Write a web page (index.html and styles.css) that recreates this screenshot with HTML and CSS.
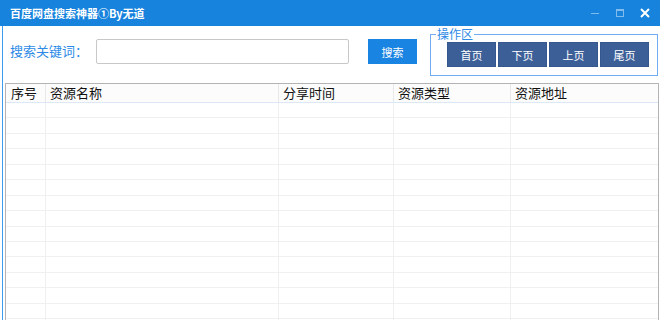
FILE: index.html
```html
<!DOCTYPE html>
<html lang="zh-CN">
<head>
    <meta charset="UTF-8">
    <meta name="viewport" content="width=device-width, initial-scale=1.0">
    <title>百度网盘搜索神器①By无道</title>
    <link rel="stylesheet" href="styles.css">
</head>
<body>
    <div class="titlebar">
        <div class="title">百度网盘搜索神器①By无道</div>
        <div class="controls">
            <svg class="ctl faded" width="14" height="14" viewBox="0 0 14 14"><path d="M3 7.5h8" stroke="#fff" stroke-width="1"/></svg>
            <svg class="ctl faded" width="14" height="14" viewBox="0 0 14 14"><rect x="3.5" y="3.5" width="7" height="7" fill="none" stroke="#fff" stroke-width="1"/><path d="M3.5 4.5h7" stroke="#fff"/></svg>
            <svg class="ctl" width="14" height="14" viewBox="0 0 14 14"><path d="M3 3l8 8M11 3l-8 8" stroke="#fff" stroke-width="2"/></svg>
        </div>
    </div>

    <div class="main">
        <div class="toolbar">
            <label class="kwlabel" for="kw">搜索关键词：</label>
            <input type="text" id="kw" class="kwinput">
            <button class="searchbtn">搜索</button>
            <div class="opbox">
                <span class="oplegend">操作区</span>
                <button class="pagebtn">首页</button>
                <button class="pagebtn">下页</button>
                <button class="pagebtn">上页</button>
                <button class="pagebtn">尾页</button>
            </div>
        </div>

        <div class="grid" id="grid">
            <div class="row head">
                <div class="cell">序号</div>
                <div class="cell">资源名称</div>
                <div class="cell">分享时间</div>
                <div class="cell">资源类型</div>
                <div class="cell">资源地址</div>
            </div>
        </div>
    </div>

    <script>
        const grid = document.getElementById('grid')
        for (let i = 0; i < 15; i++) {
            grid.innerHTML += `
                <div class="row">
                    <div class="cell"></div><div class="cell"></div><div class="cell"></div><div class="cell"></div><div class="cell"></div>
                </div>`
        }
    </script>
</body>
</html>
```

FILE: styles.css
```css
body{
    margin: 0;
    width: 660px;
    height: 320px;
    overflow: hidden;
    background: #fff;
    font-family: "Noto Sans CJK SC", "Noto Sans", sans-serif;
}
.titlebar{
    height: 26px;
    background: #1783dc;
    display: flex;
    align-items: center;
    justify-content: space-between;
}
.title{
    color: #fff;
    font-size: 11px;
    font-weight: bold;
    padding-left: 10px;
}
.controls{
    display: flex;
    align-items: center;
    gap: 11px;
    padding-right: 8px;
}
.ctl.faded{
    opacity: 0.45;
}
.main{
    margin-left: 2px;
    border-left: 1px solid #3d9cf0;
    padding-left: 2px;
    height: 294px;
}
.toolbar{
    height: 57px;
    display: flex;
    align-items: flex-start;
}
.kwlabel{
    color: #2b8ae6;
    font-size: 13px;
    margin: 16px 0 0 5px;
    width: 86px;
    line-height: 18px;
}
.kwinput{
    margin-top: 13px;
    width: 253px;
    height: 25px;
    box-sizing: border-box;
    border: 1px solid #c8c8c8;
    border-radius: 2px;
    outline: none;
}
.searchbtn{
    margin: 13px 0 0 19px;
    width: 49px;
    height: 25px;
    border: none;
    background: #1a84e2;
    color: #fff;
    font-family: inherit;
    font-size: 11px;
    padding: 0;
}
.opbox{
    position: relative;
    margin: 8px 0 0 13px;
    width: 228px;
    height: 42px;
    box-sizing: border-box;
    border: 1px solid #72acf0;
    padding: 7px 0 0 16px;
    display: flex;
    gap: 2px;
}
.oplegend{
    position: absolute;
    left: 5px;
    top: -9px;
    background: #fff;
    color: #2b8ae6;
    font-size: 12px;
    line-height: 16px;
    padding: 0 1px;
}
.pagebtn{
    width: 49px;
    height: 25px;
    padding: 0;
    border: 1px solid #35578e;
    background: #3d5f98;
    color: #fff;
    font-family: inherit;
    font-size: 11px;
}
.grid{
    border: 1px solid #b4b4b4;
    width: 654px;
    box-sizing: border-box;
    height: 240px;
    overflow: hidden;
}
.row{
    display: grid;
    grid-template-columns: 40px 233px 115px 117px 1fr;
    height: 15.45px;
    box-sizing: border-box;
    border-bottom: 1px solid #f0f0f0;
}
.row.head{
    height: 19px;
    background: #fcfcfc;
    border-bottom: 1px solid #dce8f6;
}
.cell{
    border-right: 1px solid #f0f0f0;
    font-size: 13px;
    line-height: 18px;
    padding-left: 4px;
    color: #111;
    white-space: nowrap;
}
.row.head .cell{
    border-right-color: #e8e8e8;
}
.row.head .cell:first-child{
    padding-left: 5px;
}
.cell:last-child{
    border-right: none;
}
```
